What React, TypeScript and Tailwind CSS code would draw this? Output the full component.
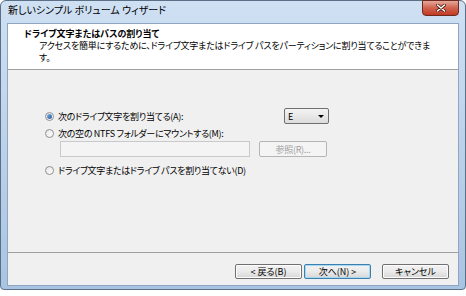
import React from "react";

const font = "font-['Noto_Sans_CJK_JP','Noto_Sans',sans-serif] [font-feature-settings:'palt']";

function Radio({ checked }: { checked?: boolean }) {
    return (
        <span className="w-[9px] h-[9px] rounded-full border border-[#8f8f8f] bg-gradient-to-br from-[#e6e6e6] to-[#ffffff] flex items-center justify-center shrink-0">
            {checked && <span className="w-[5px] h-[5px] rounded-full bg-gradient-to-br from-[#7fb2e6] to-[#1e5a9c]" />}
        </span>
    );
}

function Button({ children, focused }: { children: React.ReactNode; focused?: boolean }) {
    return (
        <div
            className={
                "w-[67px] h-[15px] rounded-[2px] border flex items-center justify-center text-[9px] leading-none text-black bg-gradient-to-b from-[#f2f2f2] via-[#ebebeb] to-[#d6d6d6] " +
                (focused ? "border-[#3c7fb1] shadow-[inset_0_0_0_1px_#a8d8f0]" : "border-[#707070] shadow-[inset_0_0_0_1px_#fcfcfc]")
            }
        >
            {children}
        </div>
    );
}

export default function App() {
    return (
        <div className={"w-[466px] h-[296px] bg-white overflow-hidden " + font}>
            <div className="h-[290px] rounded-t-[6px] rounded-b-[4px] border border-[#5b6f86] bg-gradient-to-b from-[#cfe0f3] via-[#bcd2ea] to-[#a9c4e2] flex flex-col px-[6px] pb-[3px]">
                {/* title bar */}
                <div className="h-[22px] flex justify-between shrink-0">
                    <span className="pl-[1px] pt-[4px] text-[10px] leading-none text-black">新しいシンプル ボリューム ウィザード</span>
                    <div className="w-[37px] h-[16px] -mt-px rounded-b-[4px] border border-[#6e2a1f] bg-gradient-to-b from-[#e4a89c] via-[#d0624e] to-[#c23a22] flex items-center justify-center">
                        <svg width="10" height="8" viewBox="0 0 10 8">
                            <path d="M1.5 1 L8.5 7 M8.5 1 L1.5 7" stroke="#4a1a12" strokeWidth="3" strokeLinecap="round" />
                            <path d="M1.5 1 L8.5 7 M8.5 1 L1.5 7" stroke="#ffffff" strokeWidth="1.6" strokeLinecap="round" />
                        </svg>
                    </div>
                </div>

                {/* client area */}
                <div className="flex-1 flex flex-col bg-[#f0f0f0] border border-[#8ea6c2]">
                    <div className="h-[46px] shrink-0 bg-white border-b border-[#a0a0a0] pl-[16px] pt-[4px] text-black">
                        <div className="text-[9px] leading-[12px] font-bold">ドライブ文字またはパスの割り当て</div>
                        <div className="pl-[15px] text-[9px] leading-[12px] tracking-[-0.2px]">
                            アクセスを簡単にするために、ドライブ文字またはドライブ パスをパーティションに割り当てることができま
                            <br />
                            す。
                        </div>
                    </div>

                    <div className="flex-1 flex flex-col pl-[37px] pr-[129px] pt-[38px] text-[9px] leading-none text-black tracking-[-0.3px]">
                        <div className="flex items-center justify-between h-[16px]">
                            <div className="flex items-center gap-[4px]">
                                <Radio checked />
                                <span>次のドライブ文字を割り当てる(A):</span>
                            </div>
                            <div className="w-[45px] h-[16px] rounded-[2px] border border-[#707070] bg-gradient-to-b from-[#f4f4f4] to-[#dcdcdc] flex items-center justify-between pl-[3px] pr-[4px]">
                                <span>E</span>
                                <svg width="6" height="3" viewBox="0 0 6 3">
                                    <path d="M0 0 H6 L3 3 Z" fill="#000" />
                                </svg>
                            </div>
                        </div>
                        <div className="flex items-center gap-[4px] mt-[5px]">
                            <Radio />
                            <span>次の空の NTFS フォルダーにマウントする(M):</span>
                        </div>
                        <div className="flex items-center gap-[9px] mt-[3px] pl-[15px]">
                            <div className="w-[190px] h-[16px] border border-[#c9c9c9] bg-[#f4f4f4]" />
                            <div className="w-[68px] h-[16px] rounded-[2px] border border-[#b5b5b5] bg-[#f4f4f4] flex items-center justify-center text-[#a0a0a0]">
                                参照(R)...
                            </div>
                        </div>
                        <div className="flex items-center gap-[4px] mt-[9px]">
                            <Radio />
                            <span>ドライブ文字またはドライブ パスを割り当てない(D)</span>
                        </div>
                    </div>

                    <div className="h-[33px] shrink-0 border-t border-[#a0a0a0] flex items-start justify-end pt-[11px] pr-[9px]">
                        <Button>&lt; 戻る(B)</Button>
                        <div className="ml-[2px]">
                            <Button focused>次へ(N) &gt;</Button>
                        </div>
                        <div className="ml-[11px]">
                            <Button>キャンセル</Button>
                        </div>
                    </div>
                </div>
            </div>
        </div>
    );
}
